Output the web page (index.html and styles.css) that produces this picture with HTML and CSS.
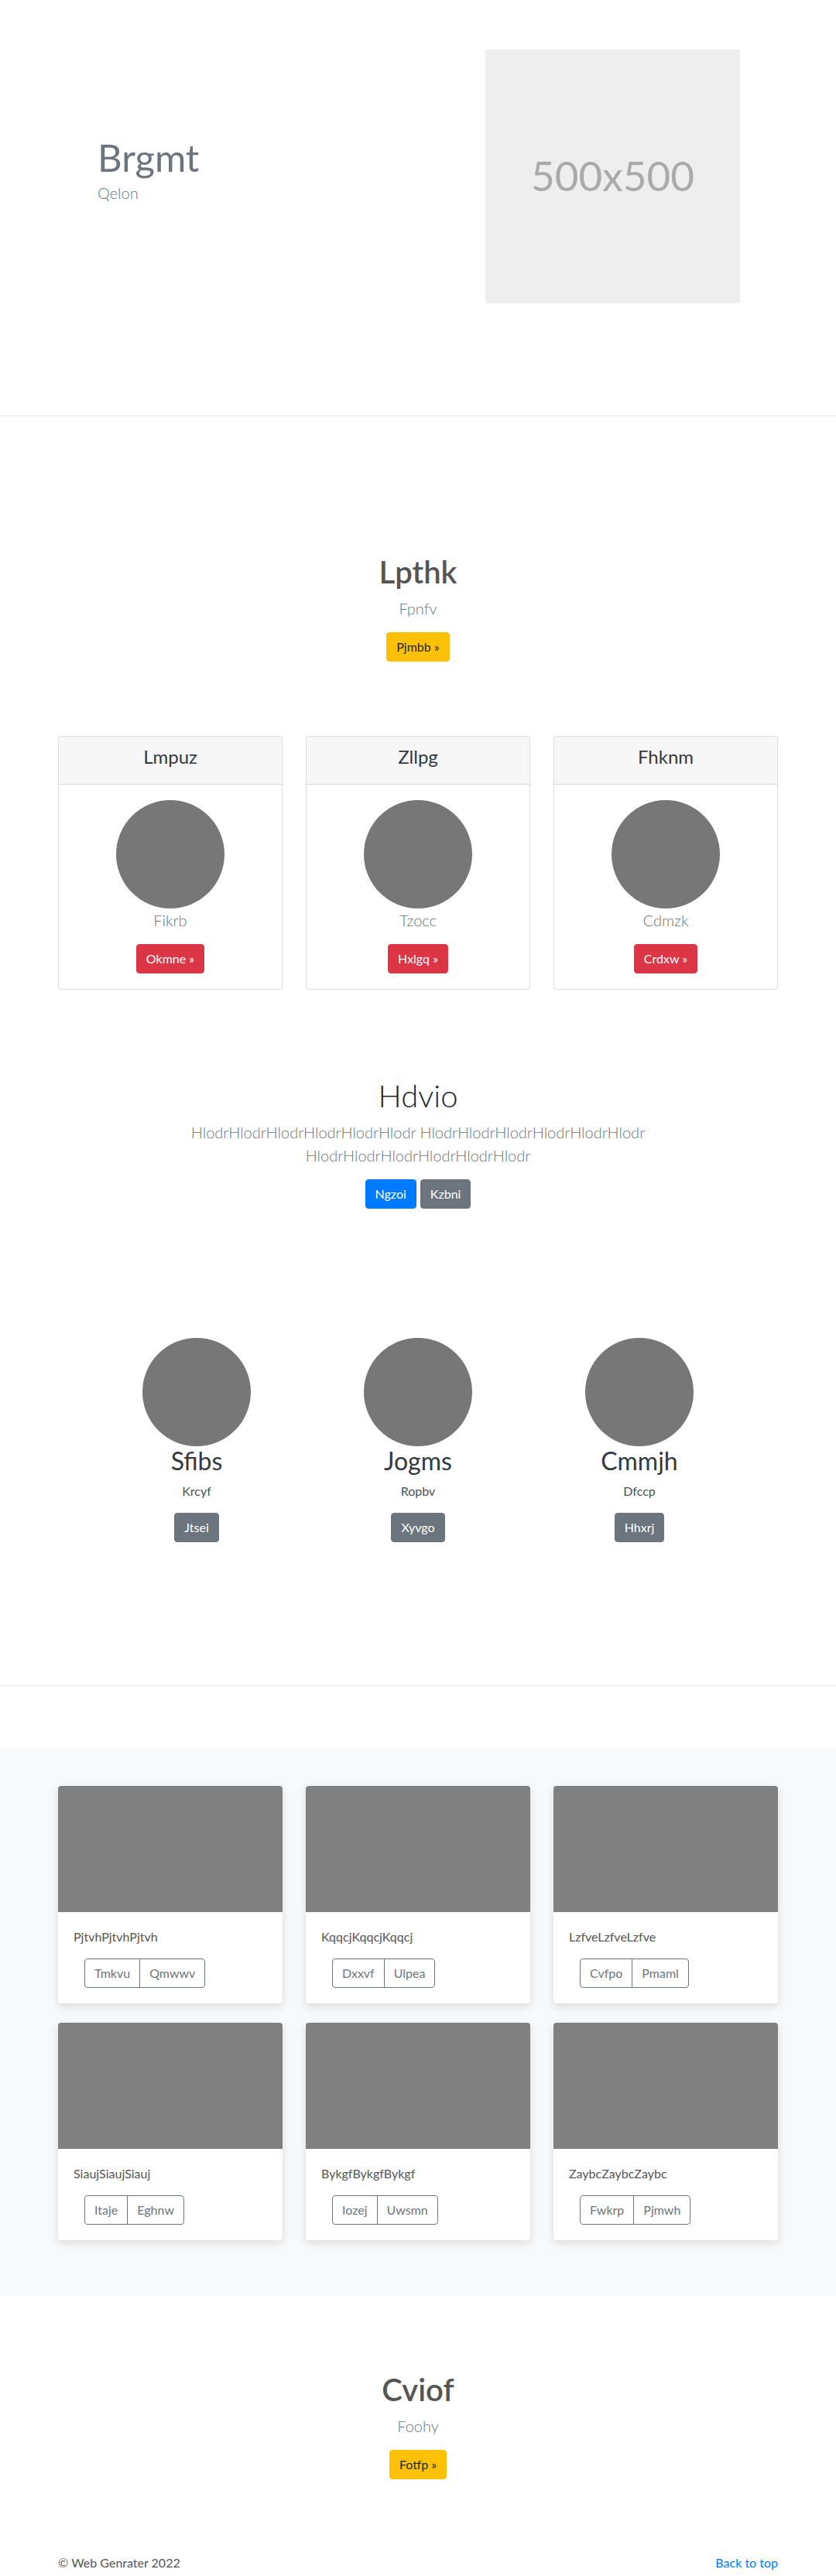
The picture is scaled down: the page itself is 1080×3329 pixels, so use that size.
FILE: index.html
```html
<!DOCTYPE html>
<html lang="en">
<head>
<meta charset="utf-8">
<title>Brgmt</title>
<link rel="stylesheet" href="styles.css">
</head>
<body>
<section class="hero">
  <div class="hero-inner">
    <div class="hero-text">
      <h1 class="hero-title">Brgmt</h1>
      <p class="hero-lead">Qelon</p>
    </div>
    <div class="hero-media">
      <svg class="hero-img" width="329" height="328" viewBox="0 0 329 328" role="img" aria-label="500x500">
        <rect width="100%" height="100%" fill="#eeeeee"/>
        <text x="50%" y="50%" dy=".35em" text-anchor="middle" fill="#aaaaaa" class="ph-text">500x500</text>
      </svg>
    </div>
  </div>
</section>
<hr class="divider">

<section class="pricing">
  <div class="center-block">
    <h1 class="section-title">Lpthk</h1>
    <p class="lead muted">Fpnfv</p>
    <a class="btn btn-warning" href="#">Pjmbb »</a>
  </div>
  <div class="deck">
    <div class="pcard">
      <div class="pcard-header"><h4 class="pcard-title">Lmpuz</h4></div>
      <div class="pcard-body">
        <svg class="avatar" width="140" height="140" viewBox="0 0 140 140"><circle cx="70" cy="70" r="70" fill="#777777"/></svg>
        <p class="lead muted pcard-lead">Fikrb</p>
        <a class="btn btn-danger" href="#">Okmne »</a>
      </div>
    </div>
    <div class="pcard">
      <div class="pcard-header"><h4 class="pcard-title">Zllpg</h4></div>
      <div class="pcard-body">
        <svg class="avatar" width="140" height="140" viewBox="0 0 140 140"><circle cx="70" cy="70" r="70" fill="#777777"/></svg>
        <p class="lead muted pcard-lead">Tzocc</p>
        <a class="btn btn-danger" href="#">Hxlgq »</a>
      </div>
    </div>
    <div class="pcard">
      <div class="pcard-header"><h4 class="pcard-title">Fhknm</h4></div>
      <div class="pcard-body">
        <svg class="avatar" width="140" height="140" viewBox="0 0 140 140"><circle cx="70" cy="70" r="70" fill="#777777"/></svg>
        <p class="lead muted pcard-lead">Cdmzk</p>
        <a class="btn btn-danger" href="#">Crdxw »</a>
      </div>
    </div>
  </div>
</section>

<section class="jumbo">
  <h1 class="jumbo-title">Hdvio</h1>
  <p class="lead muted jumbo-lead">HlodrHlodrHlodrHlodrHlodrHlodr HlodrHlodrHlodrHlodrHlodrHlodr HlodrHlodrHlodrHlodrHlodrHlodr</p>
  <div class="jumbo-actions">
    <a class="btn btn-primary" href="#">Ngzoi</a>
    <a class="btn btn-secondary" href="#">Kzbni</a>
  </div>
</section>

<section class="marketing">
  <div class="mcol">
    <svg class="avatar" width="140" height="140" viewBox="0 0 140 140"><circle cx="70" cy="70" r="70" fill="#777777"/></svg>
    <h2 class="mtitle">Sfibs</h2>
    <p class="mtext">Krcyf</p>
    <a class="btn btn-secondary" href="#">Jtsei</a>
  </div>
  <div class="mcol">
    <svg class="avatar" width="140" height="140" viewBox="0 0 140 140"><circle cx="70" cy="70" r="70" fill="#777777"/></svg>
    <h2 class="mtitle">Jogms</h2>
    <p class="mtext">Ropbv</p>
    <a class="btn btn-secondary" href="#">Xyvgo</a>
  </div>
  <div class="mcol">
    <svg class="avatar" width="140" height="140" viewBox="0 0 140 140"><circle cx="70" cy="70" r="70" fill="#777777"/></svg>
    <h2 class="mtitle">Cmmjh</h2>
    <p class="mtext">Dfccp</p>
    <a class="btn btn-secondary" href="#">Hhxrj</a>
  </div>
</section>
<hr class="divider">

<section class="album">
  <div class="album-grid">
    <div class="acard">
      <div class="acard-img"></div>
      <div class="acard-body">
        <p class="acard-text">PjtvhPjtvhPjtvh</p>
        <div class="btn-group"><a class="btn btn-outline" href="#">Tmkvu</a><a class="btn btn-outline" href="#">Qmwwv</a></div>
      </div>
    </div>
    <div class="acard">
      <div class="acard-img"></div>
      <div class="acard-body">
        <p class="acard-text">KqqcjKqqcjKqqcj</p>
        <div class="btn-group"><a class="btn btn-outline" href="#">Dxxvf</a><a class="btn btn-outline" href="#">Ulpea</a></div>
      </div>
    </div>
    <div class="acard">
      <div class="acard-img"></div>
      <div class="acard-body">
        <p class="acard-text">LzfveLzfveLzfve</p>
        <div class="btn-group"><a class="btn btn-outline" href="#">Cvfpo</a><a class="btn btn-outline" href="#">Pmaml</a></div>
      </div>
    </div>
    <div class="acard">
      <div class="acard-img"></div>
      <div class="acard-body">
        <p class="acard-text">SiaujSiaujSiauj</p>
        <div class="btn-group"><a class="btn btn-outline" href="#">Itaje</a><a class="btn btn-outline" href="#">Eghnw</a></div>
      </div>
    </div>
    <div class="acard">
      <div class="acard-img"></div>
      <div class="acard-body">
        <p class="acard-text">BykgfBykgfBykgf</p>
        <div class="btn-group"><a class="btn btn-outline" href="#">Iozej</a><a class="btn btn-outline" href="#">Uwsmn</a></div>
      </div>
    </div>
    <div class="acard">
      <div class="acard-img"></div>
      <div class="acard-body">
        <p class="acard-text">ZaybcZaybcZaybc</p>
        <div class="btn-group"><a class="btn btn-outline" href="#">Fwkrp</a><a class="btn btn-outline" href="#">Pjmwh</a></div>
      </div>
    </div>
  </div>
</section>

<section class="closing">
  <h1 class="section-title">Cviof</h1>
  <p class="lead muted">Foohy</p>
  <a class="btn btn-warning" href="#">Fotfp »</a>
</section>

<footer class="footer">
  <p class="copy">© Web Genrater 2022</p>
  <a class="backtop" href="#">Back to top</a>
</footer>
</body>
</html>
```

FILE: styles.css
```css
* { box-sizing: border-box; }

html, body {
  margin: 0;
  padding: 0;
}

body {
  font-family: Lato, "Open Sans", "Liberation Sans", sans-serif;
  font-size: 16px;
  line-height: 1.5;
  color: #212529;
  background: #ffffff;
}

h1, h2, h4, p { margin: 0; }

a { text-decoration: none; }

/* ---------- buttons ---------- */
.btn {
  display: inline-block;
  padding: 6px 12px;
  font-size: 16px;
  line-height: 24px;
  border: 1px solid transparent;
  border-radius: 4px;
  white-space: nowrap;
}
.btn-warning { background: #ffc107; border-color: #ffc107; color: #212529; }
.btn-danger { background: #dc3545; border-color: #dc3545; color: #ffffff; }
.btn-primary { background: #007bff; border-color: #007bff; color: #ffffff; }
.btn-secondary { background: #6c757d; border-color: #6c757d; color: #ffffff; }
.btn-outline { background: #ffffff; border-color: #6c757d; color: #6c757d; }

.lead {
  font-size: 20px;
  line-height: 30px;
  font-weight: 300;
}
.muted { color: #6c757d; }

.divider {
  margin: 0;
  border: 0;
  border-top: 1px solid #e5e5e5;
  height: 0;
}

/* ---------- hero ---------- */
.hero {
  padding: 64px 0 145px;
}
.hero-inner {
  width: 960px;
  margin: 0 auto;
  display: grid;
  grid-template-columns: 1fr 1fr;
  align-items: center;
}
.hero-text {
  padding-left: 66px;
  padding-bottom: 18px;
}
.hero-title {
  font-size: 49px;
  line-height: 1.2;
  font-weight: 400;
  color: #6c757d;
}
.hero-lead {
  font-size: 20px;
  line-height: 30px;
  font-weight: 300;
  color: #6c757d;
  margin-top: 2px;
}
.hero-media {
  padding-left: 87px;
  display: flex;
}
.hero-img { display: block; }
.ph-text {
  font-family: Lato, "Open Sans", sans-serif;
  font-size: 53px;
  font-weight: 400;
}

/* ---------- pricing ---------- */
.pricing {
  padding-top: 177px;
}
.center-block {
  display: flex;
  flex-direction: column;
  align-items: center;
  text-align: center;
}
.section-title {
  font-size: 40px;
  line-height: 48px;
  font-weight: 600;
  color: #555555;
  margin-bottom: 8px;
}
.center-block .lead,
.closing .lead { margin-bottom: 16px; }

.deck {
  width: 930px;
  margin: 96px auto 0;
  display: grid;
  grid-template-columns: repeat(3, 1fr);
  gap: 30px;
}
.pcard {
  border: 1px solid rgba(0, 0, 0, 0.125);
  border-radius: 4px;
  overflow: hidden;
  text-align: center;
  background: #ffffff;
}
.pcard-header {
  background: #f7f7f7;
  border-bottom: 1px solid rgba(0, 0, 0, 0.125);
  padding: 12px 20px;
}
.pcard-title {
  font-size: 24px;
  line-height: 28.8px;
  font-weight: 400;
  color: #343a40;
  margin-bottom: 8px;
}
.pcard-body {
  padding: 20px;
}
.avatar {
  display: block;
  margin: 0 auto;
}
.pcard-lead { margin-bottom: 16px; }

/* ---------- jumbo ---------- */
.jumbo {
  padding-top: 113px;
  text-align: center;
}
.jumbo-title {
  font-size: 40px;
  line-height: 48px;
  font-weight: 300;
  color: #212529;
  margin-bottom: 8px;
}
.jumbo-lead {
  max-width: 700px;
  margin: 0 auto 16px;
}
.jumbo-actions {
  display: flex;
  justify-content: center;
  gap: 5px;
  margin: 8px 0;
}

/* ---------- marketing ---------- */
.marketing {
  width: 858px;
  margin: 167px auto 185px;
  display: grid;
  grid-template-columns: repeat(3, 1fr);
}
.mcol {
  text-align: center;
}
.mtitle {
  font-size: 32px;
  line-height: 38.4px;
  font-weight: 400;
  color: #343a40;
  margin-bottom: 8px;
}
.mtext {
  color: #495057;
  margin: 0 12px 16px;
}

/* ---------- album ---------- */
.album {
  margin-top: 81px;
  background: #f8f9fa;
  padding: 48px 0 48px;
}
.album-grid {
  width: 930px;
  margin: 0 auto;
  display: grid;
  grid-template-columns: repeat(3, 1fr);
  column-gap: 30px;
  row-gap: 25px;
  padding-bottom: 24px;
}
.acard {
  background: #ffffff;
  border-radius: 4px;
  overflow: hidden;
  box-shadow: 0 4px 12px rgba(0, 0, 0, 0.12);
}
.acard-img {
  height: 163px;
  background: #808080;
}
.acard-body {
  padding: 20px;
}
.acard-text {
  color: #555555;
  margin-bottom: 16px;
}
.btn-group {
  display: inline-flex;
  margin-left: 14px;
}
.btn-group .btn:first-child {
  border-top-right-radius: 0;
  border-bottom-right-radius: 0;
}
.btn-group .btn + .btn {
  margin-left: -1px;
  border-top-left-radius: 0;
  border-bottom-left-radius: 0;
}

/* ---------- closing ---------- */
.closing {
  padding-top: 97px;
  display: flex;
  flex-direction: column;
  align-items: center;
  text-align: center;
}

/* ---------- footer ---------- */
.footer {
  width: 930px;
  margin: 96px auto 0;
  display: flex;
  justify-content: space-between;
  align-items: center;
}
.copy { color: #555555; }
.backtop { color: #007bff; }
```
